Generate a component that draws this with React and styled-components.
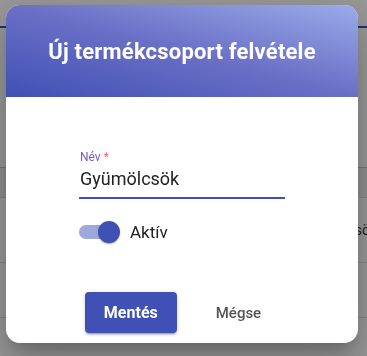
import React, { useState } from "react";
import styled, { createGlobalStyle } from "styled-components";

const GlobalStyle = createGlobalStyle`
  html, body {
    margin: 0;
    padding: 0;
    width: 367px;
    height: 356px;
    overflow: hidden;
    background: #ffffff;
    font-family: Roboto, "Liberation Sans", sans-serif;
  }
`;

/* the page lying under the modal */
const Page = styled.div`
  display: flex;
  flex-direction: column;
  width: 367px;
  height: 356px;
`;

const TabLine = styled.div`
  margin-top: 26px;
  height: 2px;
  background: #3f51b5;
`;

const TableHead = styled.div`
  margin-top: 139px;
  height: 31px;
  background: #f0f0f0;
  border-top: 1px solid #c4c4c4;
`;

const TableRow = styled.div`
  display: flex;
  align-items: center;
  height: ${({ h }) => h}px;
  border-top: 1px solid #e0e0e0;
  font-size: 14px;
  color: #333;
`;

const Cell = styled.span`
  margin-left: ${({ offset }) => offset}px;
  white-space: nowrap;
`;

const Overlay = styled.div`
  position: fixed;
  inset: 0;
  background: rgba(0, 0, 0, 0.4);
  display: flex;
  align-items: flex-start;
  padding: 5px 0 0 6px;
`;

const Dialog = styled.div`
  width: 352px;
  height: 338px;
  background: #fff;
  border-radius: 14px;
  overflow: hidden;
  display: flex;
  flex-direction: column;
  box-shadow: 0 11px 15px -7px rgba(0, 0, 0, 0.2),
    0 24px 38px 3px rgba(0, 0, 0, 0.14), 0 9px 46px 8px rgba(0, 0, 0, 0.12);
`;

const Header = styled.div`
  height: 92px;
  display: flex;
  align-items: center;
  justify-content: center;
  background: linear-gradient(to top right, #3f51b5 0%, #6a6fc6 50%, #9aabe9 100%);
`;

const Title = styled.h2`
  margin: 0;
  color: #fff;
  font-size: 22px;
  font-weight: 700;
  letter-spacing: 0.2px;
`;

const Body = styled.div`
  flex: 1;
  display: flex;
  flex-direction: column;
  align-items: center;
  padding-top: 53px;
`;

const Field = styled.div`
  width: 206px;
  display: flex;
  flex-direction: column;
`;

const Label = styled.label`
  font-size: 12px;
  line-height: 14px;
  color: #7e57c2;
  padding-left: 1px;
`;

const Star = styled.span`
  color: #f06292;
`;

const Input = styled.input`
  margin-top: 5px;
  border: none;
  border-bottom: 2px solid #3f51b5;
  outline: none;
  padding: 0 0 8px 1px;
  font-family: inherit;
  font-size: 18px;
  line-height: 20px;
  height: 20px;
  color: #212121;
  background: transparent;
`;

const SwitchRow = styled.label`
  width: 206px;
  margin-top: 21px;
  height: 24px;
  display: flex;
  align-items: center;
  gap: 9px;
  cursor: pointer;
`;

const Track = styled.span`
  position: relative;
  width: 34px;
  height: 14px;
  margin-right: 8px;
  border-radius: 7px;
  background: ${({ on }) => (on ? "#9fa8da" : "#bdbdbd")};
`;

const Thumb = styled.span`
  position: absolute;
  top: -4px;
  left: ${({ on }) => (on ? "19px" : "-4px")};
  width: 22px;
  height: 22px;
  border-radius: 50%;
  background: ${({ on }) => (on ? "#3f51b5" : "#fafafa")};
  box-shadow: 0 2px 1px -1px rgba(0, 0, 0, 0.2), 0 1px 1px 0 rgba(0, 0, 0, 0.14),
    0 1px 3px 0 rgba(0, 0, 0, 0.12);
`;

const SwitchText = styled.span`
  font-size: 17px;
  color: #212121;
`;

const Actions = styled.div`
  margin-top: 48px;
  margin-left: 2px;
  display: flex;
  gap: 19px;
  justify-content: center;
`;

const Button = styled.button`
  height: 41px;
  padding: 0 ${({ primary }) => (primary ? "19px" : "20px")};
  border: none;
  border-radius: 4px;
  font-family: inherit;
  font-size: ${({ primary }) => (primary ? "16px" : "15px")};
  font-weight: ${({ primary }) => (primary ? 700 : 500)};
  color: ${({ primary }) => (primary ? "#fff" : "#555")};
  background: ${({ primary }) => (primary ? "#3f51b5" : "transparent")};
  box-shadow: ${({ primary }) =>
    primary
      ? "0 3px 1px -2px rgba(0,0,0,0.2), 0 2px 2px 0 rgba(0,0,0,0.14), 0 1px 5px 0 rgba(0,0,0,0.12)"
      : "none"};
  cursor: pointer;
`;

export default function App() {
  const [name, setName] = useState("Gyümölcsök");
  const [active, setActive] = useState(true);

  return (
    <>
      <GlobalStyle />
      <Page>
        <TabLine />
        <TableHead />
        <TableRow h={67}>
          <Cell offset={300}>Gyümölcsök</Cell>
        </TableRow>
        <TableRow h={57} />
        <TableRow h={40} />
      </Page>
      <Overlay>
        <Dialog>
          <Header>
            <Title>Új termékcsoport felvétele</Title>
          </Header>
          <Body>
            <Field>
              <Label>
                Név <Star>*</Star>
              </Label>
              <Input value={name} onChange={(e) => setName(e.target.value)} />
            </Field>
            <SwitchRow onClick={() => setActive(!active)}>
              <Track on={active}>
                <Thumb on={active} />
              </Track>
              <SwitchText>Aktív</SwitchText>
            </SwitchRow>
            <Actions>
              <Button primary>Mentés</Button>
              <Button>Mégse</Button>
            </Actions>
          </Body>
        </Dialog>
      </Overlay>
    </>
  );
}
